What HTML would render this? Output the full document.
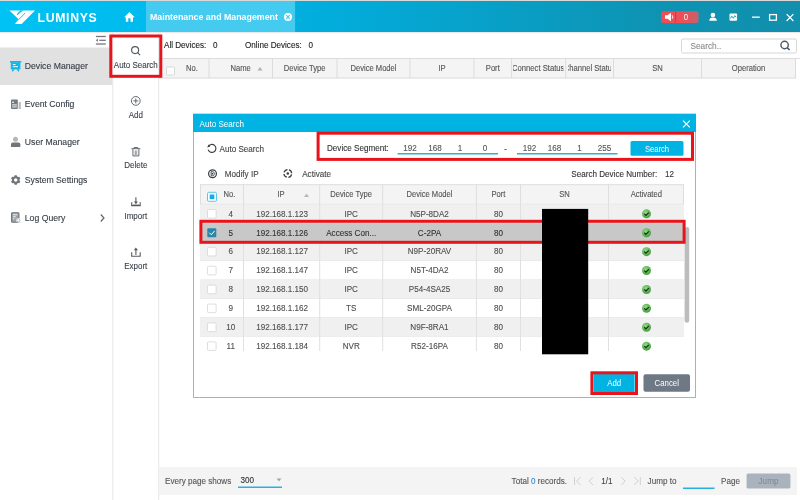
<!DOCTYPE html>
<html><head><meta charset="utf-8"><style>
html,body{margin:0;padding:0;width:800px;height:500px;overflow:hidden;background:#fff}
#bg,#fg{position:absolute;left:0;top:0;width:800px;height:500px}
#tl{position:absolute;left:0;top:0;width:888.89px;height:500px;transform:scaleX(0.9);transform-origin:0 0}
.t{position:absolute;white-space:nowrap;font-family:"Liberation Sans", sans-serif;-webkit-text-stroke:0.12px currentColor}
</style></head><body>
<svg id="bg" width="800" height="500" viewBox="0 0 800 500"><defs>
<linearGradient id="hg" gradientUnits="userSpaceOnUse" x1="0" y1="0" x2="800" y2="0">
<stop offset="0" stop-color="#00c2f4"/><stop offset="0.18" stop-color="#00bbed"/><stop offset="0.37" stop-color="#01afdf"/><stop offset="0.82" stop-color="#0e93b3"/><stop offset="1" stop-color="#128fad"/>
</linearGradient>
<linearGradient id="sh" x1="0" y1="0" x2="0" y2="1"><stop offset="0" stop-color="#dcd8d6"/><stop offset="1" stop-color="#ffffff" stop-opacity="0"/></linearGradient>
<linearGradient id="rg" x1="0" y1="0" x2="1" y2="0">
<stop offset="0" stop-color="#ef4d55"/><stop offset="0.6" stop-color="#ee4f57"/><stop offset="1" stop-color="#c0646f"/>
</linearGradient>
<radialGradient id="gg" cx="0.4" cy="0.35" r="0.7">
<stop offset="0" stop-color="#8fdc7f"/><stop offset="1" stop-color="#3f9a3c"/>
</radialGradient>
</defs><rect x="0" y="0" width="800" height="500" fill="#ffffff" /><rect x="0" y="0" width="800" height="1" fill="#d9d9d9" /><rect x="0" y="1" width="800" height="31" fill="url(#hg)" /><rect x="146" y="1" width="149.1" height="31" fill="#45caf0" /><rect x="0" y="32" width="800" height="2.2" fill="url(#sh)" /><rect x="0" y="47.5" width="112.5" height="37.5" fill="#e1e1e1" /><rect x="112.3" y="32" width="1" height="468" fill="#e6e6e6" /><rect x="158.2" y="32" width="1" height="468" fill="#e6e6e6" /><rect x="159" y="58" width="637" height="20.3" fill="#f4f4f4" /><rect x="159" y="58" width="641" height="1" fill="#dcdcdc" /><rect x="159" y="77.5" width="637" height="1" fill="#dcdcdc" /><rect x="208.5" y="58" width="1" height="20.3" fill="#dcdcdc" /><rect x="272" y="58" width="1" height="20.3" fill="#dcdcdc" /><rect x="336.5" y="58" width="1" height="20.3" fill="#dcdcdc" /><rect x="409.5" y="58" width="1" height="20.3" fill="#dcdcdc" /><rect x="473.5" y="58" width="1" height="20.3" fill="#dcdcdc" /><rect x="511.1" y="58" width="1" height="20.3" fill="#dcdcdc" /><rect x="565.2" y="58" width="1" height="20.3" fill="#dcdcdc" /><rect x="613" y="58" width="1" height="20.3" fill="#dcdcdc" /><rect x="701" y="58" width="1" height="20.3" fill="#dcdcdc" /><rect x="795" y="58" width="1" height="20.3" fill="#dcdcdc" /><rect x="681.5" y="39" width="115" height="14" rx="1.5" fill="#fff" stroke="#d6d6d6" stroke-width="1"/><rect x="159" y="467" width="638" height="28" fill="#f4f4f4" /><rect x="193" y="114" width="503" height="284" fill="#ffffff" /><rect x="193.5" y="114" width="502" height="283.5" fill="none" stroke="#5fcdec" stroke-width="1"/><rect x="193" y="114" width="503" height="18" fill="#00b3e3" /><rect x="397.6" y="153" width="100.4" height="1.5" fill="#27b1de" /><rect x="517" y="153" width="100.5" height="1.5" fill="#27b1de" /><rect x="630.5" y="141" width="53" height="14.7" rx="1.5" fill="#00b3e3"/><rect x="200" y="184.2" width="484" height="20.2" fill="#f4f4f4" /><rect x="200" y="184.2" width="484" height="1" fill="#dedede" /><rect x="200" y="203.8" width="484" height="1" fill="#dedede" /><rect x="200" y="204.4" width="484" height="18.9" fill="#f0f0f0" /><rect x="200" y="222.8" width="484" height="1" fill="#e2e2e2" /><rect x="200" y="223.3" width="484" height="18.9" fill="#c8c8c8" /><rect x="200" y="241.7" width="484" height="1" fill="#e2e2e2" /><rect x="200" y="242.2" width="484" height="18.9" fill="#f0f0f0" /><rect x="200" y="260.6" width="484" height="1" fill="#e2e2e2" /><rect x="200" y="261.1" width="484" height="18.9" fill="#ffffff" /><rect x="200" y="279.5" width="484" height="1" fill="#e2e2e2" /><rect x="200" y="280" width="484" height="18.9" fill="#f0f0f0" /><rect x="200" y="298.4" width="484" height="1" fill="#e2e2e2" /><rect x="200" y="298.9" width="484" height="18.9" fill="#ffffff" /><rect x="200" y="317.3" width="484" height="1" fill="#e2e2e2" /><rect x="200" y="317.8" width="484" height="18.9" fill="#f0f0f0" /><rect x="200" y="336.2" width="484" height="1" fill="#e2e2e2" /><rect x="200" y="336.7" width="484" height="14.3" fill="#ffffff" /><rect x="243" y="184.2" width="1" height="20.2" fill="#dedede" /><rect x="243" y="204.4" width="1" height="18.9" fill="#e0e0e0" /><rect x="243" y="242.2" width="1" height="108.8" fill="#e0e0e0" /><rect x="319.2" y="184.2" width="1" height="20.2" fill="#dedede" /><rect x="319.2" y="204.4" width="1" height="18.9" fill="#e0e0e0" /><rect x="319.2" y="242.2" width="1" height="108.8" fill="#e0e0e0" /><rect x="382.2" y="184.2" width="1" height="20.2" fill="#dedede" /><rect x="382.2" y="204.4" width="1" height="18.9" fill="#e0e0e0" /><rect x="382.2" y="242.2" width="1" height="108.8" fill="#e0e0e0" /><rect x="475.9" y="184.2" width="1" height="20.2" fill="#dedede" /><rect x="475.9" y="204.4" width="1" height="18.9" fill="#e0e0e0" /><rect x="475.9" y="242.2" width="1" height="108.8" fill="#e0e0e0" /><rect x="520" y="184.2" width="1" height="20.2" fill="#dedede" /><rect x="520" y="204.4" width="1" height="18.9" fill="#e0e0e0" /><rect x="520" y="242.2" width="1" height="108.8" fill="#e0e0e0" /><rect x="608" y="184.2" width="1" height="20.2" fill="#dedede" /><rect x="608" y="204.4" width="1" height="18.9" fill="#e0e0e0" /><rect x="608" y="242.2" width="1" height="108.8" fill="#e0e0e0" /><rect x="200" y="184.2" width="1" height="20.2" fill="#dedede" /><rect x="683" y="184.2" width="1" height="20.2" fill="#dedede" /><rect x="593.6" y="374" width="41" height="18" fill="#00b3e3"/><rect x="643.5" y="374.3" width="46.5" height="17.5" rx="2" fill="#6e7985"/><rect x="238" y="486.5" width="44" height="1.5" fill="#27b1de" /><rect x="683" y="487.5" width="31.5" height="1.5" fill="#27b1de" /><rect x="746.6" y="473.6" width="43.8" height="14.8" rx="1.5" fill="#a9b3be"/><rect x="661.2" y="11.2" width="37.4" height="11.8" rx="2.5" fill="url(#rg)"/><rect x="675.3" y="12" width="0.8" height="10.2" fill="#c9353c"/></svg>
<div id="tl"><div class="t" style="left:41.78px;top:10.9px;font-size:13.6px;line-height:14px;color:#fff;font-weight:bold;letter-spacing:0.75px;-webkit-text-stroke:0;">LUMINYS</div><div class="t" style="left:166.67px;top:10.2px;font-size:9.8px;line-height:14px;color:#fff;font-weight:bold;-webkit-text-stroke:0;">Maintenance and Management</div><div class="t" style="left:462px;width:600px;text-align:center;top:10.4px;font-size:8.5px;line-height:14px;color:#fff;font-weight:normal;-webkit-text-stroke:0;">0</div><div class="t" style="left:27.56px;top:59px;font-size:9.65px;line-height:14px;color:#353c46;font-weight:normal;">Device Manager</div><div class="t" style="left:27.56px;top:96.8px;font-size:9.65px;line-height:14px;color:#353c46;font-weight:normal;">Event Config</div><div class="t" style="left:27.56px;top:134.6px;font-size:9.65px;line-height:14px;color:#353c46;font-weight:normal;">User Manager</div><div class="t" style="left:27.56px;top:172.5px;font-size:9.65px;line-height:14px;color:#353c46;font-weight:normal;">System Settings</div><div class="t" style="left:27.56px;top:210.6px;font-size:9.65px;line-height:14px;color:#353c46;font-weight:normal;">Log Query</div><div class="t" style="left:-149.11px;width:600px;text-align:center;top:58px;font-size:8.9px;line-height:14px;color:#3c434c;font-weight:normal;">Auto Search</div><div class="t" style="left:-149.11px;width:600px;text-align:center;top:108px;font-size:8.9px;line-height:14px;color:#3c434c;font-weight:normal;">Add</div><div class="t" style="left:-149.11px;width:600px;text-align:center;top:158.3px;font-size:8.9px;line-height:14px;color:#3c434c;font-weight:normal;">Delete</div><div class="t" style="left:-149.11px;width:600px;text-align:center;top:208.5px;font-size:8.9px;line-height:14px;color:#3c434c;font-weight:normal;">Import</div><div class="t" style="left:-149.11px;width:600px;text-align:center;top:258.7px;font-size:8.9px;line-height:14px;color:#3c434c;font-weight:normal;">Export</div><div class="t" style="left:182.22px;top:38.3px;font-size:9px;line-height:14px;color:#222;font-weight:normal;">All Devices:</div><div class="t" style="left:236.67px;top:38.3px;font-size:9px;line-height:14px;color:#222;font-weight:normal;">0</div><div class="t" style="left:272.22px;top:38.3px;font-size:9px;line-height:14px;color:#222;font-weight:normal;">Online Devices:</div><div class="t" style="left:342.78px;top:38.3px;font-size:9px;line-height:14px;color:#222;font-weight:normal;">0</div><div class="t" style="left:767.22px;top:38.6px;font-size:9.2px;line-height:14px;color:#8c8c8c;font-weight:normal;">Search..</div><div class="t" style="left:-86.67px;width:600px;text-align:center;top:61.3px;font-size:8.45px;line-height:14px;color:#555;font-weight:normal;">No.</div><div class="t" style="left:-32.67px;width:600px;text-align:center;top:61.3px;font-size:8.45px;line-height:14px;color:#555;font-weight:normal;">Name</div><div class="t" style="left:38.56px;width:600px;text-align:center;top:61.3px;font-size:8.45px;line-height:14px;color:#555;font-weight:normal;">Device Type</div><div class="t" style="left:115px;width:600px;text-align:center;top:61.3px;font-size:8.45px;line-height:14px;color:#555;font-weight:normal;">Device Model</div><div class="t" style="left:191.11px;width:600px;text-align:center;top:61.3px;font-size:8.45px;line-height:14px;color:#555;font-weight:normal;">IP</div><div class="t" style="left:247.56px;width:600px;text-align:center;top:61.3px;font-size:8.45px;line-height:14px;color:#555;font-weight:normal;">Port</div><div class="t" style="left:569.56px;top:61.1px;width:56.22px;height:14px;overflow:hidden;font-size:8.5px;line-height:14px;color:#555"><div style="position:absolute;left:-271.56px;width:600px;text-align:center">Connect Status</div></div><div class="t" style="left:630.89px;top:61.1px;width:48.56px;height:14px;overflow:hidden;font-size:8.5px;line-height:14px;color:#555"><div style="position:absolute;left:-275.56px;width:600px;text-align:center">Channel Status</div></div><div class="t" style="left:430.56px;width:600px;text-align:center;top:61.3px;font-size:8.45px;line-height:14px;color:#555;font-weight:normal;">SN</div><div class="t" style="left:531.67px;width:600px;text-align:center;top:61.3px;font-size:8.45px;line-height:14px;color:#555;font-weight:normal;">Operation</div><div class="t" style="left:221.67px;top:117.2px;font-size:9px;line-height:14px;color:#fff;font-weight:normal;-webkit-text-stroke:0;">Auto Search</div><div class="t" style="left:243.89px;top:141.6px;font-size:9px;line-height:14px;color:#444;font-weight:normal;">Auto Search</div><div class="t" style="left:363.33px;top:141.4px;font-size:9px;line-height:14px;color:#333;font-weight:normal;">Device Segment:</div><div class="t" style="left:155.56px;width:600px;text-align:center;top:141.2px;font-size:9px;line-height:14px;color:#555;font-weight:normal;">192</div><div class="t" style="left:183.33px;width:600px;text-align:center;top:141.2px;font-size:9px;line-height:14px;color:#555;font-weight:normal;">168</div><div class="t" style="left:211.11px;width:600px;text-align:center;top:141.2px;font-size:9px;line-height:14px;color:#555;font-weight:normal;">1</div><div class="t" style="left:238.89px;width:600px;text-align:center;top:141.2px;font-size:9px;line-height:14px;color:#555;font-weight:normal;">0</div><div class="t" style="left:288.33px;width:600px;text-align:center;top:141.2px;font-size:9px;line-height:14px;color:#555;font-weight:normal;">192</div><div class="t" style="left:316.11px;width:600px;text-align:center;top:141.2px;font-size:9px;line-height:14px;color:#555;font-weight:normal;">168</div><div class="t" style="left:343.89px;width:600px;text-align:center;top:141.2px;font-size:9px;line-height:14px;color:#555;font-weight:normal;">1</div><div class="t" style="left:371.67px;width:600px;text-align:center;top:141.2px;font-size:9px;line-height:14px;color:#555;font-weight:normal;">255</div><div class="t" style="left:261.67px;width:600px;text-align:center;top:142px;font-size:9px;line-height:14px;color:#555;font-weight:normal;">-</div><div class="t" style="left:430px;width:600px;text-align:center;top:142px;font-size:8.5px;line-height:14px;color:#fff;font-weight:normal;-webkit-text-stroke:0;">Search</div><div class="t" style="left:249.78px;top:166.8px;font-size:9px;line-height:14px;color:#444;font-weight:normal;">Modify IP</div><div class="t" style="left:335.78px;top:166.8px;font-size:9px;line-height:14px;color:#444;font-weight:normal;">Activate</div><div class="t" style="left:634.78px;top:167px;font-size:9px;line-height:14px;color:#333;font-weight:normal;">Search Device Number:</div><div class="t" style="left:738.89px;top:167px;font-size:9px;line-height:14px;color:#333;font-weight:normal;">12</div><div class="t" style="left:-45px;width:600px;text-align:center;top:186.8px;font-size:8.45px;line-height:14px;color:#555;font-weight:normal;">No.</div><div class="t" style="left:12.22px;width:600px;text-align:center;top:186.8px;font-size:8.45px;line-height:14px;color:#555;font-weight:normal;">IP</div><div class="t" style="left:90.22px;width:600px;text-align:center;top:186.8px;font-size:8.45px;line-height:14px;color:#555;font-weight:normal;">Device Type</div><div class="t" style="left:177.22px;width:600px;text-align:center;top:186.8px;font-size:8.45px;line-height:14px;color:#555;font-weight:normal;">Device Model</div><div class="t" style="left:253.89px;width:600px;text-align:center;top:186.8px;font-size:8.45px;line-height:14px;color:#555;font-weight:normal;">Port</div><div class="t" style="left:327.22px;width:600px;text-align:center;top:186.8px;font-size:8.45px;line-height:14px;color:#555;font-weight:normal;">SN</div><div class="t" style="left:418.11px;width:600px;text-align:center;top:186.8px;font-size:8.45px;line-height:14px;color:#555;font-weight:normal;">Activated</div><div class="t" style="left:-43.56px;width:600px;text-align:center;top:206.65px;font-size:9px;line-height:14px;color:#4e4e4e;font-weight:normal;">4</div><div class="t" style="left:13.56px;width:600px;text-align:center;top:206.65px;font-size:9px;line-height:14px;color:#4e4e4e;font-weight:normal;">192.168.1.123</div><div class="t" style="left:90.22px;width:600px;text-align:center;top:206.65px;font-size:9px;line-height:14px;color:#4e4e4e;font-weight:normal;">IPC</div><div class="t" style="left:177.22px;width:600px;text-align:center;top:206.65px;font-size:9px;line-height:14px;color:#4e4e4e;font-weight:normal;">N5P-8DA2</div><div class="t" style="left:253.89px;width:600px;text-align:center;top:206.65px;font-size:9px;line-height:14px;color:#4e4e4e;font-weight:normal;">80</div><div class="t" style="left:-43.56px;width:600px;text-align:center;top:225.55px;font-size:9px;line-height:14px;color:#333;font-weight:normal;">5</div><div class="t" style="left:13.56px;width:600px;text-align:center;top:225.55px;font-size:9px;line-height:14px;color:#333;font-weight:normal;">192.168.1.126</div><div class="t" style="left:90.22px;width:600px;text-align:center;top:225.55px;font-size:9px;line-height:14px;color:#333;font-weight:normal;">Access Con...</div><div class="t" style="left:177.22px;width:600px;text-align:center;top:225.55px;font-size:9px;line-height:14px;color:#333;font-weight:normal;">C-2PA</div><div class="t" style="left:253.89px;width:600px;text-align:center;top:225.55px;font-size:9px;line-height:14px;color:#333;font-weight:normal;">80</div><div class="t" style="left:-43.56px;width:600px;text-align:center;top:244.45px;font-size:9px;line-height:14px;color:#4e4e4e;font-weight:normal;">6</div><div class="t" style="left:13.56px;width:600px;text-align:center;top:244.45px;font-size:9px;line-height:14px;color:#4e4e4e;font-weight:normal;">192.168.1.127</div><div class="t" style="left:90.22px;width:600px;text-align:center;top:244.45px;font-size:9px;line-height:14px;color:#4e4e4e;font-weight:normal;">IPC</div><div class="t" style="left:177.22px;width:600px;text-align:center;top:244.45px;font-size:9px;line-height:14px;color:#4e4e4e;font-weight:normal;">N9P-20RAV</div><div class="t" style="left:253.89px;width:600px;text-align:center;top:244.45px;font-size:9px;line-height:14px;color:#4e4e4e;font-weight:normal;">80</div><div class="t" style="left:-43.56px;width:600px;text-align:center;top:263.35px;font-size:9px;line-height:14px;color:#4e4e4e;font-weight:normal;">7</div><div class="t" style="left:13.56px;width:600px;text-align:center;top:263.35px;font-size:9px;line-height:14px;color:#4e4e4e;font-weight:normal;">192.168.1.147</div><div class="t" style="left:90.22px;width:600px;text-align:center;top:263.35px;font-size:9px;line-height:14px;color:#4e4e4e;font-weight:normal;">IPC</div><div class="t" style="left:177.22px;width:600px;text-align:center;top:263.35px;font-size:9px;line-height:14px;color:#4e4e4e;font-weight:normal;">N5T-4DA2</div><div class="t" style="left:253.89px;width:600px;text-align:center;top:263.35px;font-size:9px;line-height:14px;color:#4e4e4e;font-weight:normal;">80</div><div class="t" style="left:-43.56px;width:600px;text-align:center;top:282.25px;font-size:9px;line-height:14px;color:#4e4e4e;font-weight:normal;">8</div><div class="t" style="left:13.56px;width:600px;text-align:center;top:282.25px;font-size:9px;line-height:14px;color:#4e4e4e;font-weight:normal;">192.168.1.150</div><div class="t" style="left:90.22px;width:600px;text-align:center;top:282.25px;font-size:9px;line-height:14px;color:#4e4e4e;font-weight:normal;">IPC</div><div class="t" style="left:177.22px;width:600px;text-align:center;top:282.25px;font-size:9px;line-height:14px;color:#4e4e4e;font-weight:normal;">P54-4SA25</div><div class="t" style="left:253.89px;width:600px;text-align:center;top:282.25px;font-size:9px;line-height:14px;color:#4e4e4e;font-weight:normal;">80</div><div class="t" style="left:-43.56px;width:600px;text-align:center;top:301.15px;font-size:9px;line-height:14px;color:#4e4e4e;font-weight:normal;">9</div><div class="t" style="left:13.56px;width:600px;text-align:center;top:301.15px;font-size:9px;line-height:14px;color:#4e4e4e;font-weight:normal;">192.168.1.162</div><div class="t" style="left:90.22px;width:600px;text-align:center;top:301.15px;font-size:9px;line-height:14px;color:#4e4e4e;font-weight:normal;">TS</div><div class="t" style="left:177.22px;width:600px;text-align:center;top:301.15px;font-size:9px;line-height:14px;color:#4e4e4e;font-weight:normal;">SML-20GPA</div><div class="t" style="left:253.89px;width:600px;text-align:center;top:301.15px;font-size:9px;line-height:14px;color:#4e4e4e;font-weight:normal;">80</div><div class="t" style="left:-43.56px;width:600px;text-align:center;top:320.05px;font-size:9px;line-height:14px;color:#4e4e4e;font-weight:normal;">10</div><div class="t" style="left:13.56px;width:600px;text-align:center;top:320.05px;font-size:9px;line-height:14px;color:#4e4e4e;font-weight:normal;">192.168.1.177</div><div class="t" style="left:90.22px;width:600px;text-align:center;top:320.05px;font-size:9px;line-height:14px;color:#4e4e4e;font-weight:normal;">IPC</div><div class="t" style="left:177.22px;width:600px;text-align:center;top:320.05px;font-size:9px;line-height:14px;color:#4e4e4e;font-weight:normal;">N9F-8RA1</div><div class="t" style="left:253.89px;width:600px;text-align:center;top:320.05px;font-size:9px;line-height:14px;color:#4e4e4e;font-weight:normal;">80</div><div class="t" style="left:-43.56px;width:600px;text-align:center;top:338.95px;font-size:9px;line-height:14px;color:#4e4e4e;font-weight:normal;">11</div><div class="t" style="left:13.56px;width:600px;text-align:center;top:338.95px;font-size:9px;line-height:14px;color:#4e4e4e;font-weight:normal;">192.168.1.184</div><div class="t" style="left:90.22px;width:600px;text-align:center;top:338.95px;font-size:9px;line-height:14px;color:#4e4e4e;font-weight:normal;">NVR</div><div class="t" style="left:177.22px;width:600px;text-align:center;top:338.95px;font-size:9px;line-height:14px;color:#4e4e4e;font-weight:normal;">R52-16PA</div><div class="t" style="left:253.89px;width:600px;text-align:center;top:338.95px;font-size:9px;line-height:14px;color:#4e4e4e;font-weight:normal;">80</div><div class="t" style="left:382.44px;width:600px;text-align:center;top:376px;font-size:8.7px;line-height:14px;color:#fff;font-weight:normal;-webkit-text-stroke:0;">Add</div><div class="t" style="left:440.89px;width:600px;text-align:center;top:376px;font-size:8.7px;line-height:14px;color:#fff;font-weight:normal;-webkit-text-stroke:0;">Cancel</div><div class="t" style="left:183.33px;top:474.3px;font-size:9px;line-height:14px;color:#555;font-weight:normal;">Every page shows</div><div class="t" style="left:267.33px;top:473px;font-size:9px;line-height:14px;color:#333;font-weight:normal;">300</div><div class="t" style="left:568.44px;top:474px;font-size:9px;line-height:14px;color:#555;font-weight:normal;">Total <span style="color:#2d8ae0">0</span> records.</div><div class="t" style="left:668.11px;top:474px;font-size:9px;line-height:14px;color:#444;font-weight:normal;">1/1</div><div class="t" style="left:719.56px;top:474px;font-size:9px;line-height:14px;color:#555;font-weight:normal;">Jump to</div><div class="t" style="left:801.11px;top:474px;font-size:9px;line-height:14px;color:#555;font-weight:normal;">Page</div><div class="t" style="left:553.89px;width:600px;text-align:center;top:474px;font-size:9px;line-height:14px;color:#808b96;font-weight:normal;">Jump</div></div>
<svg id="fg" width="800" height="500" viewBox="0 0 800 500"><polygon points="9.4,10.5 35,10.5 21.65,24.1 15,24.1 18.6,19.3" fill="#fff"/><polygon points="20.5,10.2 23.1,10.2 17.6,15 16.7,14.3" fill="#03c0f3"/><path d="M25.2,12.9 L18.1,20.3" stroke="#03c0f3" stroke-width="0.9" fill="none"/><polygon points="129.5,12 134.8,17.3 133,17.3 133,21.8 130.5,21.8 130.5,18.3 128.3,18.3 128.3,21.8 125.8,21.8 125.8,17.3 124.2,17.3" fill="#fff"/><circle cx="288" cy="17" r="4" fill="#fff"/><path d="M286.2,15.2 L289.8,18.8 M289.8,15.2 L286.2,18.8" stroke="#45caf0" stroke-width="1.2"/><polygon points="665,15.3 667.5,15.3 671,12.8 671,21.3 667.5,18.8 665,18.8" fill="#fff"/><path d="M672.2,15.3 Q673.6,17 672.2,18.8" stroke="#fff" stroke-width="0.9" fill="none"/><circle cx="712.9" cy="15" r="2.3" fill="#fff"/><path d="M709.2,20.8 Q709.4,17.6 712.9,17.6 Q716.5,17.6 716.9,20.8 Z" fill="#fff"/><rect x="729.5" y="13.4" width="7.6" height="7.3" rx="1" fill="#fff"/><path d="M730.3,18.5 L731.8,16.2 L733.3,18.3 L734.8,15.6 L736.3,17.3" stroke="#1196b6" stroke-width="0.9" fill="none"/><rect x="752" y="16.5" width="7.8" height="1.3" fill="#fff"/><rect x="769.6" y="14.6" width="6.8" height="5.6" fill="none" stroke="#fff" stroke-width="1.3"/><path d="M786.6,14.2 L793.4,21 M793.4,14.2 L786.6,21" stroke="#fff" stroke-width="1.2"/><g fill="#727880"><rect x="95.9" y="35.85" width="9.9" height="1.3"/><rect x="99.3" y="39.65" width="6.5" height="1.3"/><rect x="95.9" y="43.35" width="9.9" height="1.3"/><polygon points="95.8,40.3 97.9,38.6 97.9,42"/></g><g fill="#12b7ec"><rect x="10" y="61" width="11.2" height="1.7"/><rect x="10.8" y="62.4" width="9.6" height="6.9"/><polygon points="11.9,69.2 15,69.2 12.3,72"/><polygon points="16.2,69.2 19.3,69.2 18.9,72"/></g><g fill="#fff"><rect x="12.8" y="64" width="2.8" height="0.95"/><rect x="12.8" y="66.2" width="5.2" height="0.95"/></g><rect x="11" y="99.5" width="6.8" height="9.6" rx="0.8" fill="#74797e"/><rect x="18.7" y="102" width="2.1" height="7" fill="#b5b9bd"/><rect x="12.1" y="101.7" width="1.9" height="1.1" fill="#fff"/><rect x="12.1" y="104" width="4.7" height="3.7" fill="#c4c7ca"/><rect x="12.1" y="105.6" width="4.7" height="0.6" fill="#8a8f94"/><circle cx="15.5" cy="139.3" r="2.5" fill="#b3b7bc"/><path d="M11,147 V144.3 Q11,142.6 12.8,142.6 H18.5 Q20.3,142.6 20.3,144.3 V147 Z" fill="#70757a"/><g transform="translate(15.7,180)"><circle r="3.7" fill="#70757a"/><g fill="#70757a"><rect x="-1.3" y="-4.7" width="2.6" height="9.4" rx="0.4" transform="rotate(0)"/><rect x="-1.3" y="-4.7" width="2.6" height="9.4" rx="0.4" transform="rotate(60)"/><rect x="-1.3" y="-4.7" width="2.6" height="9.4" rx="0.4" transform="rotate(120)"/></g><circle r="1.75" fill="#fff"/></g><rect x="11.6" y="212.7" width="7.3" height="9.6" rx="0.9" fill="#9fa3a8" stroke="#6e7378" stroke-width="1.1"/><g fill="#f4f5f6"><rect x="13" y="214.3" width="4.4" height="0.9"/><rect x="13" y="216.3" width="2.8" height="0.9"/><rect x="13" y="218.3" width="1.5" height="0.9"/></g><circle cx="18.4" cy="220.3" r="2.3" fill="#fff"/><circle cx="18.3" cy="220.2" r="1.6" fill="none" stroke="#a9adb2" stroke-width="0.8"/><path d="M19.5,221.4 L20.7,222.6" stroke="#a9adb2" stroke-width="0.8"/><path d="M100.8,214.5 L104,218 L100.8,221.5" stroke="#666" stroke-width="1.2" fill="none"/><circle cx="135.1" cy="50.1" r="3.5" fill="none" stroke="#555b61" stroke-width="1.15"/><path d="M137.6,52.6 L140.1,55.1" stroke="#555b61" stroke-width="1.2"/><circle cx="135.8" cy="100.9" r="4.4" fill="none" stroke="#555b61" stroke-width="0.9"/><path d="M133.3,100.9 H138.3 M135.8,98.4 V103.4" stroke="#555b61" stroke-width="0.9"/><rect x="134.4" y="150.6" width="3" height="4.4" fill="#c4c4c4"/><rect x="135.5" y="150.6" width="0.8" height="4.4" fill="#8a8a8a"/><g fill="none" stroke="#555b61" stroke-width="0.9"><path d="M131.4,148.7 H140.4"/><path d="M134.1,148.7 V147.5 H137.7 V148.7"/><path d="M132.9,149.2 V155.9 H138.9 V149.2"/></g><g fill="none" stroke="#555b61" stroke-width="1.1"><path d="M131.7,202.2 V205.6 H140.2 V202.2"/><path d="M135.9,197.3 V202.5"/></g><polygon points="133.9,201.6 137.9,201.6 135.9,204.2" fill="#555b61"/><rect x="132.6" y="204" width="6.7" height="1" fill="#b5b5b5"/><g fill="none" stroke="#555b61" stroke-width="1.1"><path d="M131.7,252.2 V256.3 H140.2 V252.2"/><path d="M135.9,249.8 V255"/></g><polygon points="133.8,250.2 138,250.2 135.9,247.6" fill="#555b61"/><circle cx="784.6" cy="45" r="3.7" fill="none" stroke="#4b5866" stroke-width="1.4"/><path d="M787.2,47.6 L789.6,50" stroke="#4b5866" stroke-width="1.6"/><rect x="166.5" y="67" width="8" height="8" rx="1" fill="#fff" stroke="#cfcfcf" stroke-width="0.8"/><polygon points="257.5,70.5 262.5,70.5 260,67" fill="#b0b0b0"/><path d="M683,120.6 L689.8,127.4 M689.8,120.6 L683,127.4" stroke="#fff" stroke-width="1.1"/><path d="M208.3,146.7 A4,4 0 1 1 208.1,149.6" fill="none" stroke="#3a3f44" stroke-width="1.15"/><polygon points="207.2,147.6 208.6,144.6 210.2,146.4" fill="#3a3f44"/><circle cx="212.5" cy="173.7" r="3.9" fill="none" stroke="#3a3f44" stroke-width="1.25"/><path d="M211.1,171.6 H212.3 A2.1,2.1 0 0 1 212.3,175.8 H211.1 Z" fill="none" stroke="#3a3f44" stroke-width="0.85"/><circle cx="212.4" cy="173.7" r="0.85" fill="#3a3f44"/><circle cx="287.8" cy="173.5" r="3.85" fill="none" stroke="#3a3f44" stroke-width="1.3" stroke-dasharray="4.45 1.6" stroke-dashoffset="5.25"/><circle cx="287.8" cy="173.5" r="1.25" fill="#3a3f44"/><rect x="207.5" y="192.3" width="9" height="9" rx="1.2" fill="#fff" stroke="#5cc6ea" stroke-width="1"/><rect x="209.7" y="194.5" width="4.6" height="4.6" fill="#10aee4"/><polygon points="304,197 309,197 306.5,193.5" fill="#b8b8b8"/><rect x="207.5" y="209.55" width="8.6" height="8.6" rx="1" fill="#fff" stroke="#d5d5d5" stroke-width="0.8"/><circle cx="646.5" cy="213.85" r="4.5" fill="url(#gg)"/><path d="M644.3,213.85 L645.9,215.45 L648.8,212.55" stroke="#1b2a1b" stroke-width="1.2" fill="none"/><rect x="207.3" y="228.25" width="9" height="9" rx="1" fill="#2d86a8"/><path d="M209.3,232.75 L211.3,234.75 L214.6,230.95" stroke="#fff" stroke-width="1" fill="none"/><circle cx="646.5" cy="232.75" r="4.5" fill="url(#gg)"/><path d="M644.3,232.75 L645.9,234.35 L648.8,231.45" stroke="#1b2a1b" stroke-width="1.2" fill="none"/><rect x="207.5" y="247.35" width="8.6" height="8.6" rx="1" fill="#fff" stroke="#d5d5d5" stroke-width="0.8"/><circle cx="646.5" cy="251.65" r="4.5" fill="url(#gg)"/><path d="M644.3,251.65 L645.9,253.25 L648.8,250.35" stroke="#1b2a1b" stroke-width="1.2" fill="none"/><rect x="207.5" y="266.25" width="8.6" height="8.6" rx="1" fill="#fff" stroke="#d5d5d5" stroke-width="0.8"/><circle cx="646.5" cy="270.55" r="4.5" fill="url(#gg)"/><path d="M644.3,270.55 L645.9,272.15 L648.8,269.25" stroke="#1b2a1b" stroke-width="1.2" fill="none"/><rect x="207.5" y="285.15" width="8.6" height="8.6" rx="1" fill="#fff" stroke="#d5d5d5" stroke-width="0.8"/><circle cx="646.5" cy="289.45" r="4.5" fill="url(#gg)"/><path d="M644.3,289.45 L645.9,291.05 L648.8,288.15" stroke="#1b2a1b" stroke-width="1.2" fill="none"/><rect x="207.5" y="304.05" width="8.6" height="8.6" rx="1" fill="#fff" stroke="#d5d5d5" stroke-width="0.8"/><circle cx="646.5" cy="308.35" r="4.5" fill="url(#gg)"/><path d="M644.3,308.35 L645.9,309.95 L648.8,307.05" stroke="#1b2a1b" stroke-width="1.2" fill="none"/><rect x="207.5" y="322.95" width="8.6" height="8.6" rx="1" fill="#fff" stroke="#d5d5d5" stroke-width="0.8"/><circle cx="646.5" cy="327.25" r="4.5" fill="url(#gg)"/><path d="M644.3,327.25 L645.9,328.85 L648.8,325.95" stroke="#1b2a1b" stroke-width="1.2" fill="none"/><rect x="207.5" y="341.85" width="8.6" height="8.6" rx="1" fill="#fff" stroke="#d5d5d5" stroke-width="0.8"/><circle cx="646.5" cy="346.15" r="4.5" fill="url(#gg)"/><path d="M644.3,346.15 L645.9,347.75 L648.8,344.85" stroke="#1b2a1b" stroke-width="1.2" fill="none"/><rect x="684.6" y="227" width="4.6" height="95.8" rx="2.3" fill="#bcbcbc"/><polygon points="276.5,478.5 281.5,478.5 279,481.3" fill="#a0a0a0"/><g fill="none" stroke="#c5cdd6" stroke-width="0.9"><path d="M574.5,477.2 V485"/><path d="M580.5,477.2 L576.6,481.1 L580.5,485"/><path d="M593,477.2 L589.1,481.1 L593,485"/><path d="M621.3,477.2 L625.2,481.1 L621.3,485"/><path d="M634.3,477.2 L638.2,481.1 L634.3,485"/><path d="M640.3,477.2 V485"/></g><rect x="110.8" y="36" width="50" height="40.3" fill="none" stroke="#e8141c" stroke-width="3"/><rect x="318.1" y="133.2" width="374.4" height="26.2" fill="none" stroke="#e8141c" stroke-width="3"/><rect x="200.9" y="221.3" width="483.2" height="21" fill="none" stroke="#e8141c" stroke-width="3"/><rect x="591.9" y="372.8" width="44.6" height="20.7" fill="none" stroke="#e8141c" stroke-width="3"/><rect x="542" y="208.9" width="46.2" height="145.4" fill="#000"/></svg>
</body></html>
